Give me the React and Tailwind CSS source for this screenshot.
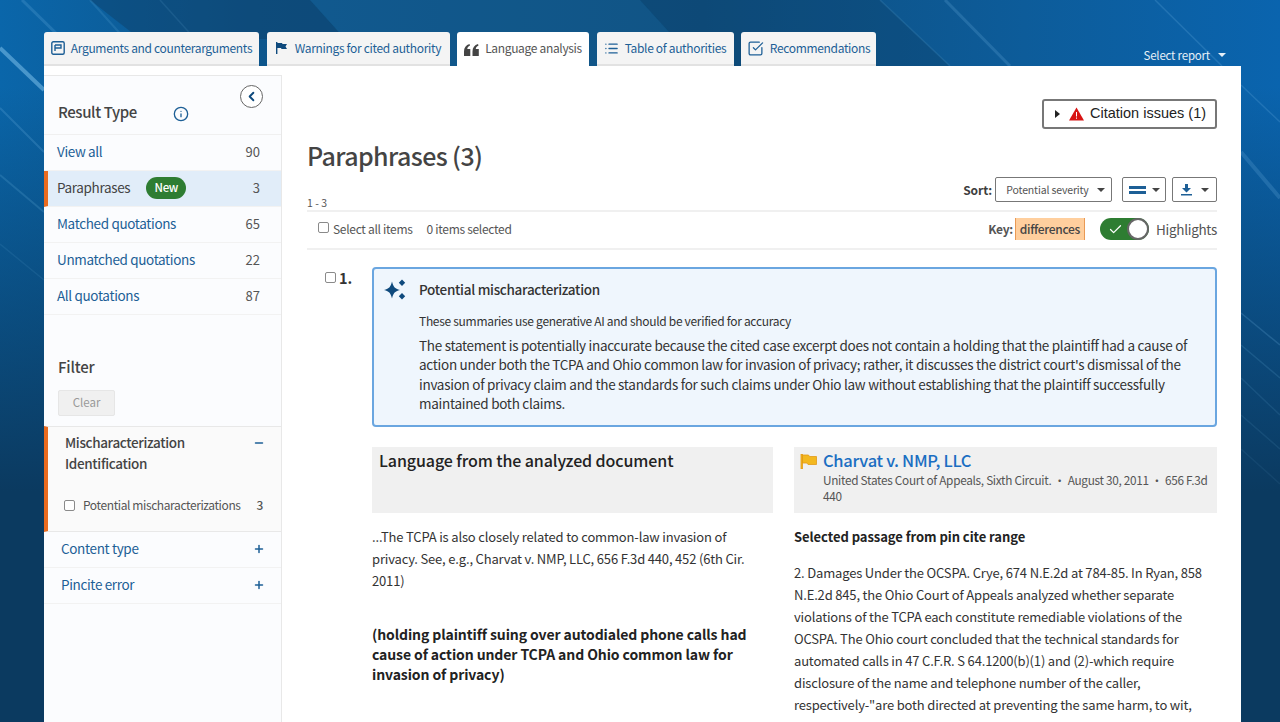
import React from 'react';
import { ChevronLeft, Info, List, SquareCheckBig, Plus, Minus, Check } from 'lucide-react';

const tabs = [
    { label: 'Arguments and counterarguments', w: 'w-[215px]', icon: 'brief' },
    { label: 'Warnings for cited authority', w: 'w-[183px]', icon: 'flag' },
    { label: 'Language analysis', w: 'w-[132px]', icon: 'quote', active: true },
    { label: 'Table of authorities', w: 'w-[137px]', icon: 'list' },
    { label: 'Recommendations', w: 'w-[135px]', icon: 'check' },
];

const results = [
    { label: 'View all', count: 90 },
    { label: 'Paraphrases', count: 3, active: true },
    { label: 'Matched quotations', count: 65 },
    { label: 'Unmatched quotations', count: 22 },
    { label: 'All quotations', count: 87 },
];

const TabIcon = ({ name }) => {
    if (name === 'flag') {
        return (
            <svg width="12" height="12" viewBox="0 0 12 12" fill="#0f4a7d" className="mr-[2px]">
                <path d="M1 0h1.400v12H1zM2.400 1H7l.5 1H12l-1.500 2.500L12 7H6.500L6 6H2.400z" />
            </svg>
        );
    }
    if (name === 'list') return <List size={15} strokeWidth={2.2} className="text-[#1d5f96]" />;
    if (name === 'check') return <SquareCheckBig size={17} strokeWidth={1.8} className="text-[#1d5f96]" />;
    if (name === 'quote') {
        return (
            <svg width="15" height="12" viewBox="0 0 15 12" fill="#444" className="mt-[4px]">
                <path d="M0 12V7.500C0 3.500 2 1 5.500 0l.5 1.500C4.300 2.300 3.300 3.500 3.300 5H6.300v7zM8.500 12V7.500C8.500 3.500 10.500 1 14 0l.5 1.500C12.800 2.300 11.800 3.500 11.800 5h3v7z" />
            </svg>
        );
    }
    return (
        <svg width="14" height="14" viewBox="0 0 14 14" fill="none" stroke="#1d5f96" strokeWidth="1.4">
            <rect x="0.800" y="0.800" width="12.400" height="12.400" rx="1.500" />
            <path d="M4 4h6v3H4M4 4v6" />
        </svg>
    );
};

// the diagonal light streaks and darker bands behind the page
const Background = () => (
    <svg className="absolute inset-0 w-full h-full" viewBox="0 0 1280 722" preserveAspectRatio="none">
        <path d="M90 0H310L345 39H140Z" fill="#0e3f66" opacity="0.45" />
        <path d="M640 0H880L950 66H700Z" fill="#0b3f68" opacity="0.35" />
        <path d="M345 39L310 0H640L700 66H380Z" fill="#2a7ab0" opacity="0.12" />
        <g stroke="#7cc0ea" fill="none">
            <path d="M22 0L62 39" strokeWidth="3" opacity="0.2" />
            <path d="M90 0L125 39" strokeWidth="2" opacity="0.15" />
            <path d="M160 0L195 39" strokeWidth="1.500" opacity="0.12" />
            <path d="M0 48L44 90" strokeWidth="4" opacity="0.55" />
            <path d="M0 108L44 152" strokeWidth="2" opacity="0.2" />
            <path d="M0 175L44 212" strokeWidth="2" opacity="0.18" />
            <path d="M0 244L44 280" strokeWidth="1.500" opacity="0.1" />
            <path d="M880 0L950 66" strokeWidth="1.500" opacity="0.15" />
            <path d="M945 0L1010 66" strokeWidth="3" opacity="0.2" />
            <path d="M1155 0L1222 66" strokeWidth="1.500" opacity="0.2" />
            <path d="M1241 85L1280 122" strokeWidth="1.500" opacity="0.2" />
            <path d="M1241 152L1280 198" strokeWidth="4" opacity="0.2" />
            <path d="M1241 313L1280 345" strokeWidth="1.500" opacity="0.2" />
            <path d="M1241 345L1280 378" strokeWidth="1.500" opacity="0.15" />
            <path d="M1241 378L1280 415" strokeWidth="1.500" opacity="0.12" />
            <path d="M1241 415L1280 449" strokeWidth="1.500" opacity="0.1" />
            <path d="M1241 449L1280 484" strokeWidth="1.500" opacity="0.08" />
        </g>
    </svg>
);

const Caret = ({ className }) => (
    <span className={`inline-block border-x-[4px] border-t-[4px] border-x-transparent ${className}`} />
);

const Box = ({ className = '' }) => (
    <span className={`inline-block shrink-0 w-[11px] h-[11px] rounded-[2px] border border-[#8a8a8a] bg-white ${className}`} />
);

export default function App() {
    return (
        <div className="relative w-[1280px] h-[722px] overflow-hidden bg-[linear-gradient(180deg,#0b3a6000_12%,#0b3a60_68%),linear-gradient(90deg,#0a66aa_0%,#0e568c_20%,#0e4f80_55%,#0d5c9a_80%,#0a64ae_100%)] font-['Noto_Sans_CJK_SC','Noto_Sans',sans-serif] text-[#3d3d3d]">
            <Background />
            <div className="relative flex flex-col ml-[44px] w-[1197px] pt-[32px] h-full">
                <div className="flex items-end h-[34px] relative">
                    <div className="flex gap-[7.5px]">
                        {tabs.map((t) => (
                            <div
                                key={t.label}
                                className={`${t.w} h-[34px] rounded-t-[3px] flex items-center justify-center gap-[6px] text-[12px] tracking-[-0.33px] whitespace-nowrap ${t.active ? 'bg-white text-[#555] pb-[2px]' : 'bg-[#f4f4f4] border-b-2 border-[#e2e2e2] text-[#1d5f96]'}`}
                            >
                                <TabIcon name={t.icon} />
                                <span>{t.label}</span>
                            </div>
                        ))}
                    </div>
                    <div className="ml-auto mr-[15px] mb-[2px] flex items-center gap-[8px] text-[11.5px] tracking-[-0.2px] text-[#e6f0f8]">
                        Select report <Caret className="border-t-[#e6f0f8]" />
                    </div>
                </div>

                <div className="flex-1 flex bg-white min-h-0">
                    <aside className="w-[238px] mt-[9px] shrink-0 bg-[#fbfcfe] border-t border-r border-[#e8e8e8] flex flex-col">
                        <div className="h-[59px] relative flex items-end pb-[11px] pl-[14px] border-b border-[#f0f0f0]">
                            <span className="text-[15px] leading-[22px] tracking-[-0.4px] font-medium text-[#444]">Result Type</span>
                            <Info size={16} className="text-[#1d5f96] ml-[36px] mb-[1px]" />
                            <div className="absolute right-[18px] top-[9px] w-[23px] h-[23px] rounded-full border border-[#666] bg-white flex items-center justify-center">
                                <ChevronLeft size={15} strokeWidth={3} className="text-[#0f4a7d]" />
                            </div>
                        </div>
                        {results.map((r) => (
                            <div
                                key={r.label}
                                className={`h-[36px] pb-[2px] flex items-center pr-[21px] text-[13.5px] tracking-[-0.35px] border-b border-[#f2f2f2] ${r.active ? 'bg-[#e1edf9] border-l-4 border-l-[#ea6b1f] pl-[9px] text-[#444]' : 'pl-[13px] text-[#1d5f96]'}`}
                            >
                                <span>{r.label}</span>
                                {r.active && (
                                    <span className="ml-[16px] w-[40px] h-[22px] rounded-full bg-[#2e7d32] text-white text-[11.5px] font-medium flex items-center justify-center">New</span>
                                )}
                                <span className="ml-auto text-[13px] tracking-normal text-[#555]">{r.count}</span>
                            </div>
                        ))}
                        <div className="pt-[41px] pl-[14px] text-[15px] tracking-[-0.2px] font-medium text-[#444] leading-[22px]">Filter</div>
                        <div className="mt-[12px] ml-[14px] w-[57px] h-[26px] rounded-[2px] bg-[#f0f0f0] border border-[#e6e6e6] text-[11.5px] text-[#999] flex items-center justify-center">Clear</div>
                        <div className="mt-[10px] h-[106px] border-y border-[#e8e8e8] border-l-4 border-l-[#ea6b1f] bg-[#fafafa] pl-[17px] pr-[16px]">
                            <div className="flex justify-between pt-[5px]">
                                <span className="w-[140px] text-[13.5px] tracking-[-0.35px] leading-[21px] font-medium text-[#444]">Mischaracterization Identification</span>
                                <Minus size={12} strokeWidth={3} className="mt-[5px] text-[#1d5f96]" />
                            </div>
                            <div className="flex items-center mt-[22px] pr-[2px] text-[12px] tracking-[-0.4px] text-[#555] whitespace-nowrap">
                                <Box className="-ml-[1px]" />
                                <span className="ml-[8px]">Potential mischaracterizations</span>
                                <span className="ml-auto font-medium">3</span>
                            </div>
                        </div>
                        {['Content type', 'Pincite error'].map((f) => (
                            <div key={f} className="h-[36px] pb-[2px] flex items-center justify-between pl-[17px] pr-[16px] border-b border-[#f2f2f2] text-[13.5px] tracking-[-0.35px] text-[#1d5f96]">
                                {f}
                                <Plus size={12} strokeWidth={3} />
                            </div>
                        ))}
                    </aside>

                    <main className="flex-1 min-w-0 pl-[25px] pr-[24px]">
                        <div className="flex justify-end pt-[33px]">
                            <div className="w-[175px] h-[30px] rounded-[3px] border-2 border-[#777] flex items-center pl-[11px] gap-[7px] font-['Liberation_Sans',sans-serif] text-[14.5px] text-[#222]">
                                <span className="border-y-[4px] border-l-[5px] border-y-transparent border-l-[#222]" />
                                <svg width="15" height="14" viewBox="0 0 15 13" className="ml-[2px]">
                                    <path d="M7.500 0L15 13H0Z" fill="#d81414" />
                                    <path d="M7 4.500h1V9H7zM7 10h1v1.300H7z" fill="#fff" />
                                </svg>
                                <span className="-ml-[1px]">Citation issues (1)</span>
                            </div>
                        </div>
                        <h1 className="mt-[9px] text-[25px] tracking-[-0.6px] leading-[34px] font-medium text-[#444]">Paraphrases (3)</h1>

                        <div className="flex items-end h-[41px] -mt-[1px] pb-[1px] border-b-2 border-[#f0f0f0]">
                            <span className="text-[10.5px] leading-[12px] text-[#555]">1 - 3</span>
                            <div className="ml-auto flex items-center self-start mt-[6px] text-[12px] font-semibold tracking-[-0.1px]">
                                <span>Sort:</span>
                                <div className="ml-[3px] w-[117px] h-[25px] pl-[4px] rounded-[2px] border border-[#777] flex items-center justify-center gap-[8px] text-[10.5px] tracking-[-0.15px] font-normal text-[#555]">
                                    Potential severity <Caret className="border-t-[#444]" />
                                </div>
                                <div className="ml-[10px] w-[44px] h-[25px] rounded-[2px] border border-[#777] flex items-center justify-center gap-[6px]">
                                    <span className="w-[17px] h-[2px] border-y-[3px] border-[#1d5f96] box-content" />
                                    <Caret className="border-t-[#444]" />
                                </div>
                                <div className="ml-[6px] w-[45px] h-[25px] rounded-[2px] border border-[#777] flex items-center justify-center gap-[8px]">
                                    <svg width="13" height="13" viewBox="0 0 13 13" fill="#1d5f96">
                                        <path d="M5 1h3v4h3L6.500 9.500 2 5h3zM1 11h11v1.500H1z" />
                                    </svg>
                                    <Caret className="border-t-[#444]" />
                                </div>
                            </div>
                        </div>

                        <div className="h-[38px] pb-[2px] flex items-center border-b-2 border-[#f0f0f0] text-[12px] tracking-[-0.3px] text-[#555]">
                            <Box className="ml-[11px] mb-[3px]" />
                            <span className="ml-[4px]">Select all items</span>
                            <span className="ml-[14px]">0 items selected</span>
                            <span className="ml-auto font-semibold">Key:</span>
                            <span className="ml-[2px] px-[4px] h-[22px] flex items-center bg-[#ffcf9e] border-x border-[#e99a55] text-[#444] font-medium">differences</span>
                            <div className="ml-[15px] relative w-[49px] h-[22px] rounded-full bg-[#2e7d32] flex items-center pl-[8px]">
                                <Check size={15} strokeWidth={2} className="text-white" />
                                <span className="absolute right-0 top-0 w-[22px] h-[22px] rounded-full bg-white border-2 border-[#666]" />
                            </div>
                            <span className="ml-[7px] text-[13.5px]">Highlights</span>
                        </div>

                        <div className="flex mt-[17px]">
                            <div className="w-[65px] shrink-0 flex items-start pl-[18px] pt-[2px] text-[14.5px] font-bold leading-[18px] text-[#333]">
                                <Box className="mt-[3px] mr-[3px]" />
                                1.
                            </div>
                            <div className="flex-1 min-w-0">
                                <div className="h-[160px] rounded-[4px] border-2 border-[#6aa6e0] bg-[#eff6fd] flex text-[#333]">
                                    <div className="w-[45px] shrink-0 pl-[10px] pt-[10px]">
                                        <svg width="22" height="21" viewBox="0 0 22 21" fill="#0f4a7d">
                                            <path d="M8 2.500C9.300 7.500 10.500 9.700 16 11 10.500 12.300 9.300 14.500 8 19.500 6.700 14.500 5.500 12.300 0 11 5.500 9.700 6.700 7.500 8 2.500z" />
                                            <path d="M18 .5l3.200 3.200L18 6.900l-3.200-3.200zM18 14l3.200 3.200L18 20.400l-3.200-3.200z" />
                                        </svg>
                                    </div>
                                    <div className="flex-1 pr-[20px]">
                                        <div className="pt-[10px] text-[13.5px] tracking-[-0.3px] leading-[20px] font-medium">Potential mischaracterization</div>
                                        <div className="mt-[13px] text-[12px] tracking-[-0.3px] leading-[18px]">These summaries use generative AI and should be verified for accuracy</div>
                                        <p className="mt-[6px] text-[13.5px] tracking-[-0.28px] leading-[19.4px]">The statement is potentially inaccurate because the cited case excerpt does not contain a holding that the plaintiff had a cause of action under both the TCPA and Ohio common law for invasion of privacy; rather, it discusses the district court's dismissal of the invasion of privacy claim and the standards for such claims under Ohio law without establishing that the plaintiff successfully maintained both claims.</p>
                                    </div>
                                </div>

                                <div className="flex gap-[21px] mt-[20px] text-[#333]">
                                    <div className="w-[401px] shrink-0">
                                        <div className="h-[66px] bg-[#f0f0f0] pl-[7px] pt-[1px] text-[16px] tracking-[-0.1px] leading-[24px] font-medium text-[#222]">Language from the analyzed document</div>
                                        <p className="mt-[13px] text-[13px] tracking-[-0.17px] leading-[22px]">...The TCPA is also closely related to common-law invasion of privacy. See, e.g., Charvat v. NMP, LLC, 656 F.3d 440, 452 (6th Cir. 2011)</p>
                                        <p className="mt-[32px] text-[14px] tracking-[-0.1px] leading-[20px] font-bold text-[#222]">(holding plaintiff suing over autodialed phone calls had cause of action under TCPA and Ohio common law for invasion of privacy)</p>
                                    </div>
                                    <div className="flex-1 min-w-0">
                                        <div className="h-[66px] bg-[#f0f0f0] pl-[6px] pr-[6px] flex">
                                            <svg width="17" height="15" viewBox="0 0 17 15" className="mt-[7px] shrink-0">
                                                <path d="M1 0h1.500v15H1zM2.500 1h6l1 1.500H16.500v8H8l-1-1.500H2.500z" fill="#f3b81f" stroke="#e29a18" strokeWidth="0.8" />
                                            </svg>
                                            <div className="ml-[6px] min-w-0">
                                                <div className="text-[16.5px] tracking-[-0.3px] leading-[26px] font-medium text-[#1b6ec2]">Charvat v. NMP, LLC</div>
                                                <div className="text-[11.8px] tracking-[-0.3px] leading-[16px] -mt-[1px] text-[#555]">United States Court of Appeals, Sixth Circuit. • August 30, 2011 • 656 F.3d 440</div>
                                            </div>
                                        </div>
                                        <div className="mt-[14px] text-[13px] tracking-[-0.05px] leading-[20px] font-bold text-[#222]">Selected passage from pin cite range</div>
                                        <p className="mt-[15px] text-[13px] tracking-[-0.17px] leading-[22px]">2. Damages Under the OCSPA. Crye, 674 N.E.2d at 784-85. In Ryan, 858 N.E.2d 845, the Ohio Court of Appeals analyzed whether separate violations of the TCPA each constitute remediable violations of the OCSPA. The Ohio court concluded that the technical standards for automated calls in 47 C.F.R. S 64.1200(b)(1) and (2)-which require disclosure of the name and telephone number of the caller, respectively-"are both directed at preventing the same harm, to wit,</p>
                                    </div>
                                </div>
                            </div>
                        </div>
                    </main>
                </div>
            </div>
        </div>
    );
}
